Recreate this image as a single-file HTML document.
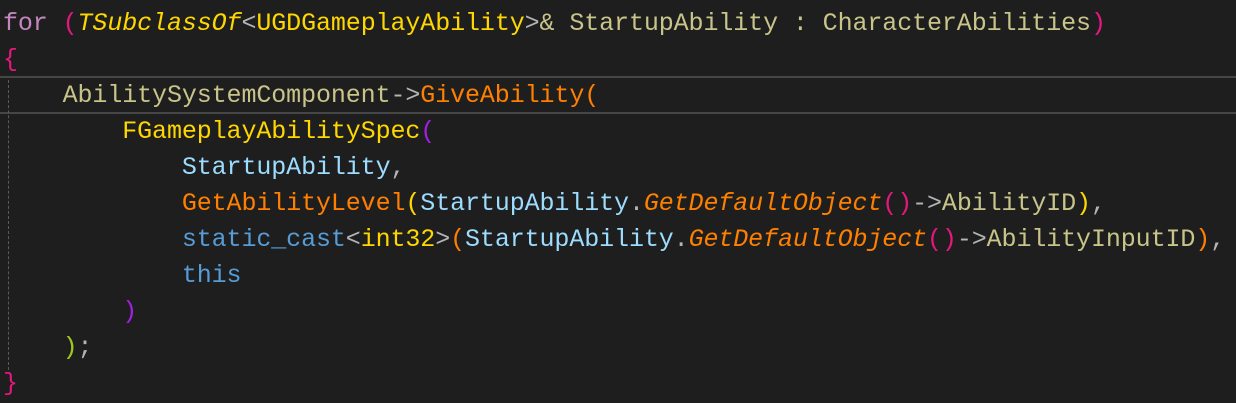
<!DOCTYPE html>
<html><head><meta charset="utf-8"><style>
html,body{margin:0;padding:0;background:#1e1e1e;width:1236px;height:403px;overflow:hidden}
.code{position:absolute;left:3px;top:6px;font-family:"Liberation Mono",monospace;font-size:25px;letter-spacing:-0.1px;line-height:36px;white-space:pre;color:#dcdcdc}
.hl{position:absolute;left:0;top:76px;width:1236px;height:34px;border-top:2px solid #464646;border-bottom:2px solid #464646}
.guide{position:absolute;left:8px;top:80px;height:290px;border-left:1px dashed #5a5a5a}
.kw{color:#c586c0}.pk{color:#e5177f}.ty{color:#ffd700}.it{font-style:italic}
.kh{color:#c8c48a}.op{color:#b4b4b4}.fn{color:#ff8000}.pu{color:#a020e0}
.va{color:#9cdcfe}.bl{color:#569cd6}.gr{color:#a0c820}
</style></head><body>
<div class="hl"></div>
<div class="guide"></div>
<div class="code"><span class="kw">for</span> <span class="pk">(</span><span class="ty it">TSubclassOf</span><span class="op">&lt;</span><span class="ty">UGDGameplayAbility</span><span class="op">&gt;</span><span class="kh">&amp; StartupAbility : CharacterAbilities</span><span class="pk">)</span>
<span class="pk">{</span>
    <span class="kh">AbilitySystemComponent</span><span class="op">-&gt;</span><span class="fn">GiveAbility</span><span class="fn">(</span>
        <span class="ty">FGameplayAbilitySpec</span><span class="pu">(</span>
            <span class="va">StartupAbility</span><span class="op">,</span>
            <span class="fn">GetAbilityLevel</span><span class="ty">(</span><span class="va">StartupAbility</span><span class="op">.</span><span class="fn it">GetDefaultObject</span><span class="pk">()</span><span class="op">-&gt;</span><span class="kh">AbilityID</span><span class="ty">)</span><span class="op">,</span>
            <span class="bl">static_cast</span><span class="op">&lt;</span><span class="ty">int32</span><span class="op">&gt;</span><span class="fn">(</span><span class="va">StartupAbility</span><span class="op">.</span><span class="fn it">GetDefaultObject</span><span class="pk">()</span><span class="op">-&gt;</span><span class="kh">AbilityInputID</span><span class="fn">)</span><span class="op">,</span>
            <span class="bl">this</span>
        <span class="pu">)</span>
    <span class="gr">)</span><span class="op">;</span>
<span class="pk">}</span></div>
</body></html>
